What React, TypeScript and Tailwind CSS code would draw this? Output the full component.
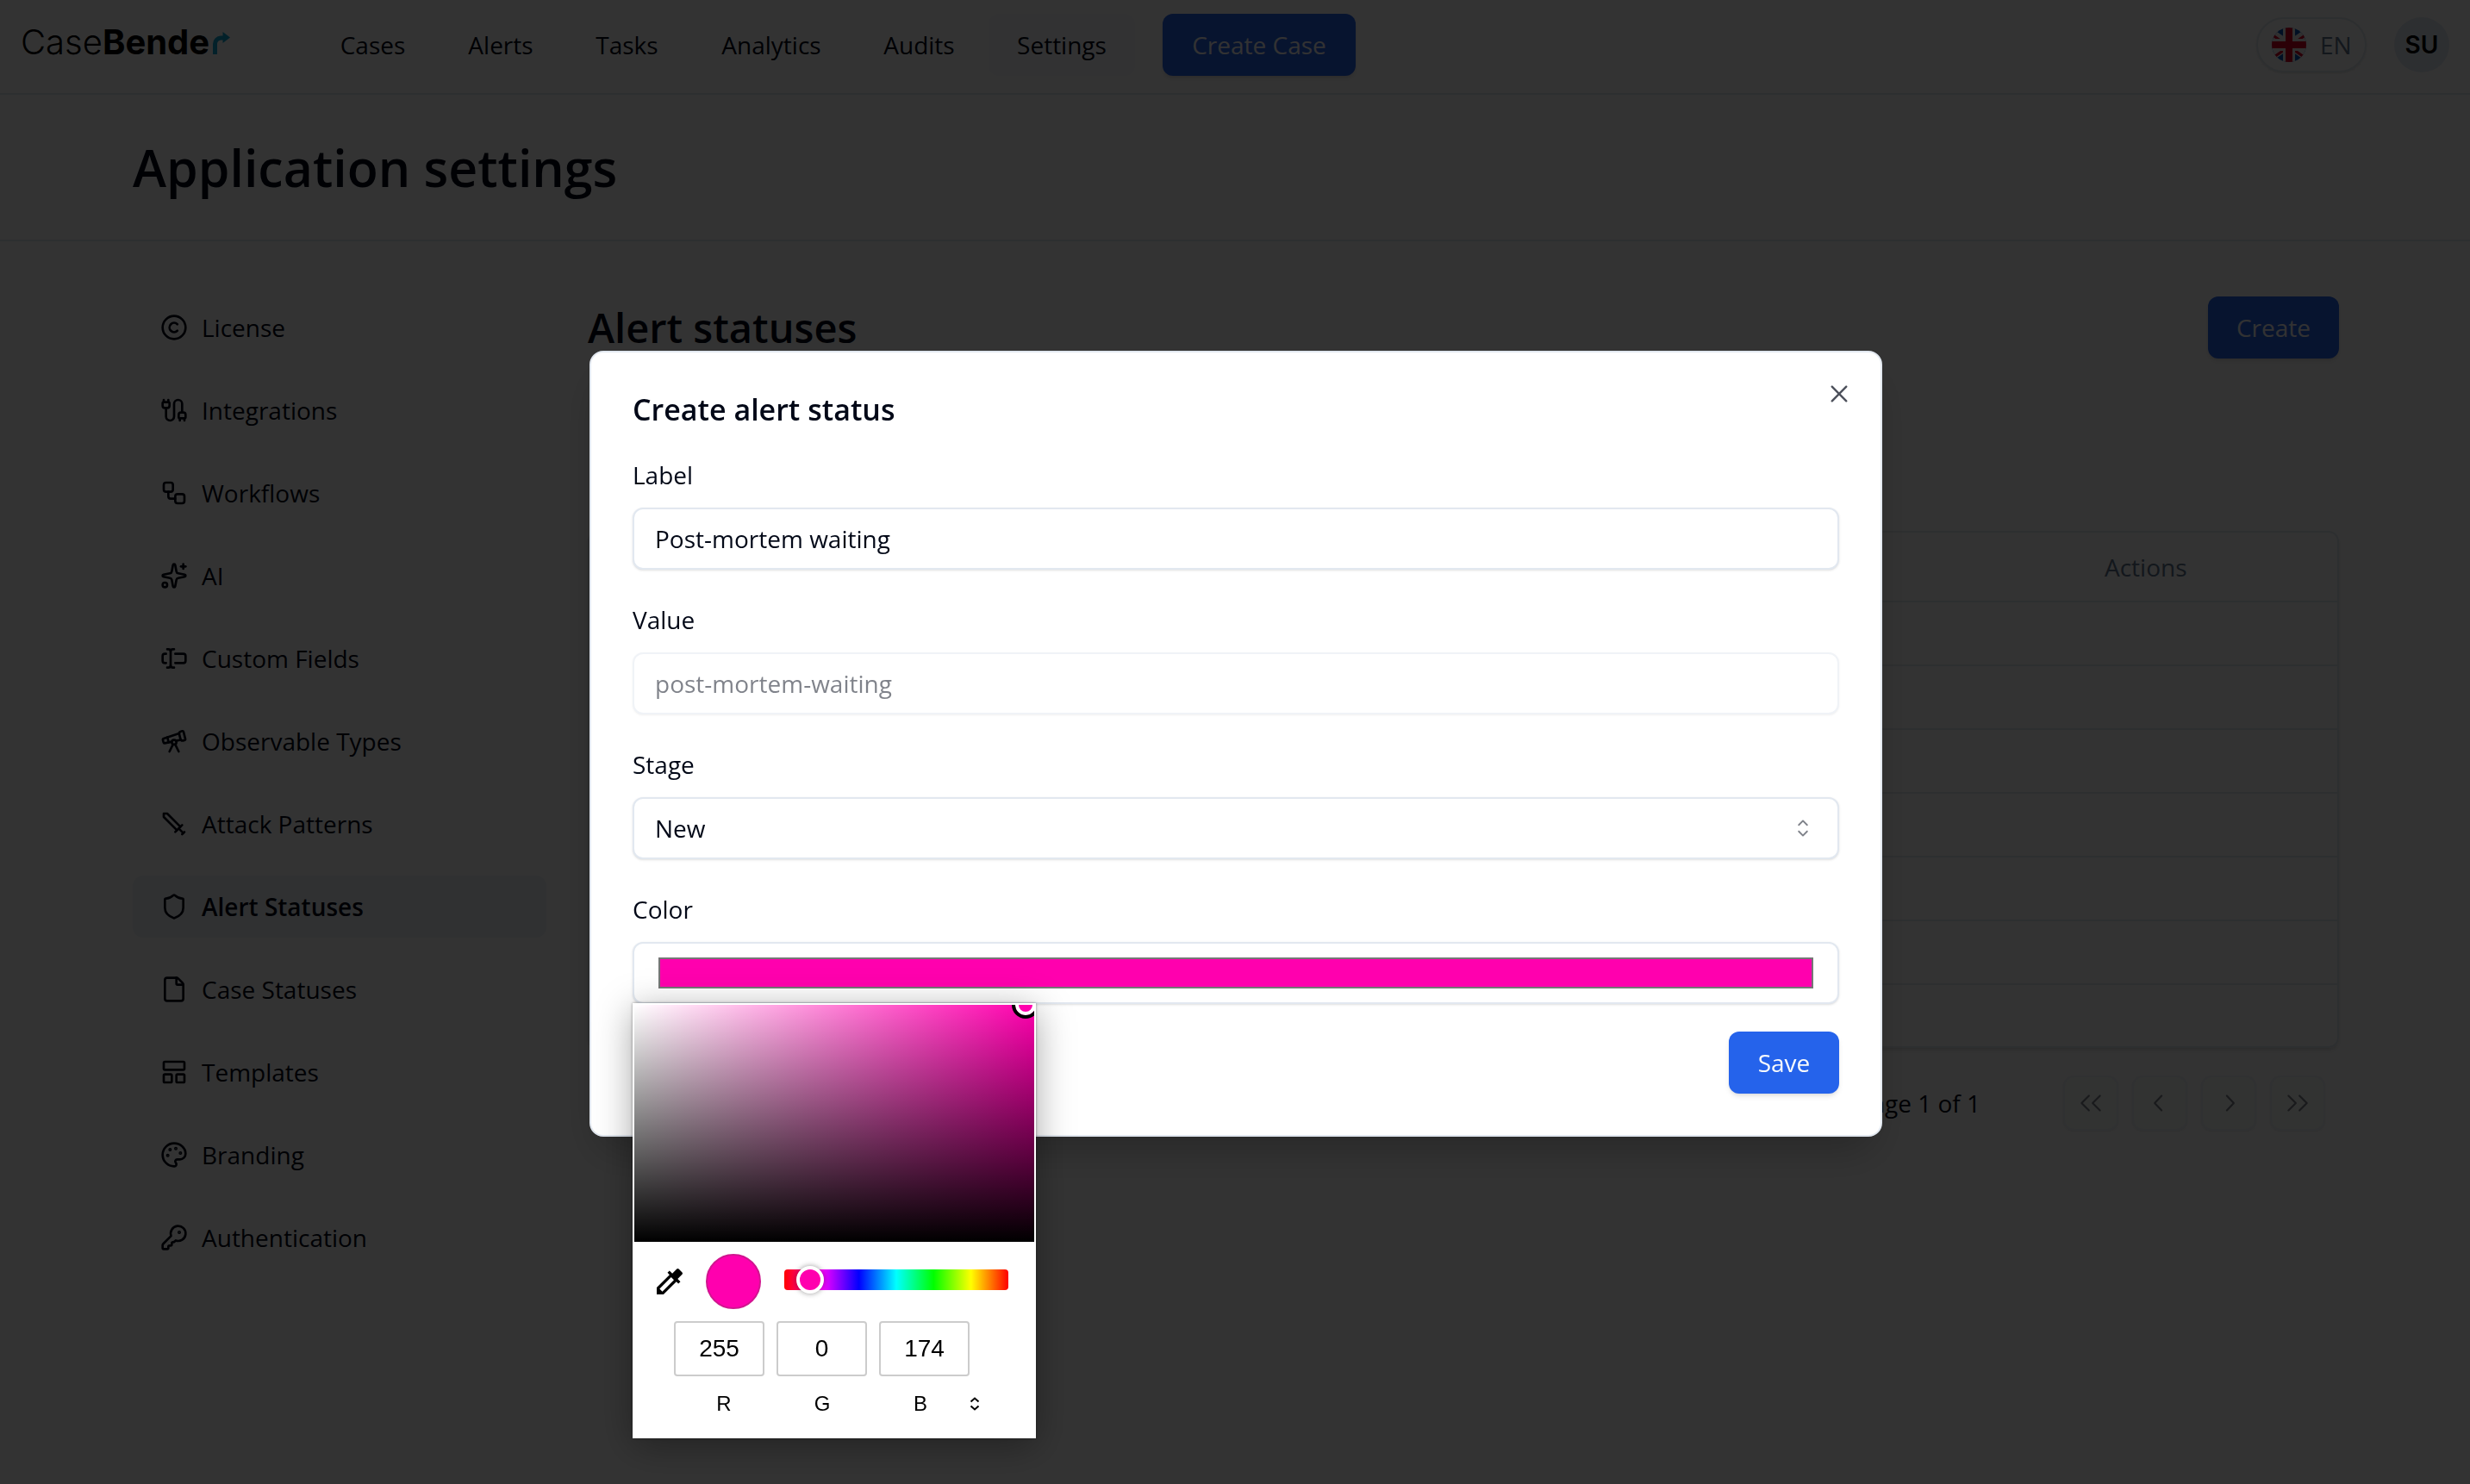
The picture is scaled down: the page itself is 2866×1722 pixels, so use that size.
import {
  Cable,
  Copyright,
  File,
  KeyRound,
  LayoutPanelTop,
  Palette,
  Shield,
  Sparkles,
  Sword,
  Telescope,
  TextCursorInput,
  Workflow,
} from "lucide-react";
import { MdColorize } from "react-icons/md";
import {
  RxCaretSort,
  RxChevronLeft,
  RxChevronRight,
  RxCross2,
  RxDoubleArrowLeft,
  RxDoubleArrowRight,
} from "react-icons/rx";

const navLinks = [
  { label: "Cases", width: "w-[141px]" },
  { label: "Alerts", width: "w-[140px]" },
  { label: "Tasks", width: "w-[137px]" },
  { label: "Analytics", width: "w-[182px]" },
  { label: "Audits", width: "w-[145px]" },
  { label: "Settings", width: "w-[170px]", active: true },
];

const menu = [
  { label: "License", icon: Copyright },
  { label: "Integrations", icon: Cable },
  { label: "Workflows", icon: Workflow },
  { label: "AI", icon: Sparkles },
  { label: "Custom Fields", icon: TextCursorInput },
  { label: "Observable Types", icon: Telescope },
  // blade points to the upper left
  { label: "Attack Patterns", icon: Sword, flip: true },
  { label: "Alert Statuses", icon: Shield, active: true },
  { label: "Case Statuses", icon: File },
  { label: "Templates", icon: LayoutPanelTop },
  { label: "Branding", icon: Palette },
  { label: "Authentication", icon: KeyRound },
];

const pagerButtons = [
  { label: "First page", icon: RxDoubleArrowLeft },
  { label: "Previous page", icon: RxChevronLeft },
  { label: "Next page", icon: RxChevronRight },
  { label: "Last page", icon: RxDoubleArrowRight },
];

const channels = [
  { name: "R", value: 255 },
  { name: "G", value: 0 },
  { name: "B", value: 174 },
];

function Logo() {
  return (
    <a href="#" className="flex w-[338px] shrink-0 items-baseline pb-1.5 font-['Inter',sans-serif] text-[40px] leading-[48px] text-black">
      <span className="font-light">Case</span>
      <span className="font-bold">Bende</span>
      <svg viewBox="0 0 20 26" className="ml-1 h-[26px] w-5" fill="none">
        <path d="M2.5 26V14a7 7 0 0 1 7-7H13" stroke="#12a5d0" strokeWidth="5" />
        <path d="M11.500 0 20 6.500 11.500 13z" fill="#12a5d0" />
      </svg>
    </a>
  );
}

function FlagUK() {
  return (
    <svg viewBox="0 0 40 40" className="h-10 w-10">
      <clipPath id="flag-round">
        <circle cx="20" cy="20" r="20" />
      </clipPath>
      <g clipPath="url(#flag-round)">
        <path fill="#0052b4" d="M0 0h40v40H0z" />
        <path d="M-6 2 46 38M46 2-6 38" stroke="#f0f0f0" strokeWidth="9" />
        <path d="M-6 4 46 40M46 4-6 40" stroke="#d80027" strokeWidth="3" />
        <path d="M20 0v40M0 20h40" stroke="#f0f0f0" strokeWidth="14" />
        <path d="M20 0v40M0 20h40" stroke="#d80027" strokeWidth="8" />
      </g>
    </svg>
  );
}

function Header() {
  return (
    <header className="flex h-[110px] items-start border-b-2 border-slate-200 px-6 pt-4">
      <div className="flex h-[72px] flex-1 items-center">
        <Logo />
        <nav className="flex items-center gap-2">
          {navLinks.map(({ label, width, active }) => (
            <a
              key={label}
              href="#"
              className={`${width} flex h-[72px] items-center justify-center rounded-xl font-medium ${active ? "bg-slate-50" : ""}`}
            >
              {label}
            </a>
          ))}
        </nav>
        <button className="ml-8 h-[72px] w-56 rounded-xl bg-[#2563eb] font-medium text-slate-50 shadow-md">
          Create Case
        </button>
      </div>
      <div className="flex h-[72px] items-center gap-8">
        <button className="flex h-16 w-32 items-center gap-4 rounded-full border-2 border-slate-200 pl-4 text-slate-500 shadow-sm">
          <FlagUK />
          EN
        </button>
        <button className="h-16 w-16 rounded-full bg-[#e2e8f4] font-['Inter',sans-serif] font-semibold text-black">
          SU
        </button>
      </div>
    </header>
  );
}

function Sidebar() {
  return (
    <nav className="flex w-[480px] shrink-0 flex-col gap-6">
      {menu.map(({ label, icon: Icon, active, flip }) => (
        <a
          key={label}
          href="#"
          className={`flex h-[72px] items-center gap-4 rounded-xl px-8 ${active ? "bg-slate-100 font-semibold" : "font-medium"}`}
        >
          <Icon className={`h-8 w-8 ${flip ? "-scale-x-100" : ""}`} />
          {label}
        </a>
      ))}
    </nav>
  );
}

function StatusTable() {
  return (
    <div className="mt-[200px] rounded-xl border-2 border-slate-200 shadow-md">
      <table className="w-full text-left">
        <thead>
          <tr className="h-20 border-b-2 border-slate-200 text-slate-500">
            <td />
            <th scope="col" className="w-[270px] font-medium">
              Actions
            </th>
          </tr>
        </thead>
        <tbody>
          {[1, 2, 3, 4, 5, 6, 7].map((row) => (
            <tr key={row} className="h-[74px] border-b-2 border-slate-200 last:h-[72px] last:border-0">
              <td />
              <td />
            </tr>
          ))}
        </tbody>
      </table>
    </div>
  );
}

function Pagination() {
  return (
    <div className="mt-8 flex items-center justify-end gap-24 pr-4">
      <span className="font-medium">Page 1 of 1</span>
      <div className="flex gap-4">
        {pagerButtons.map(({ label, icon: Icon }) => (
          <button
            key={label}
            disabled
            aria-label={label}
            className="flex h-16 w-16 items-center justify-center rounded-xl border-2 border-slate-200 bg-[#f0faf6] opacity-50 shadow-sm"
          >
            <Icon className="h-8 w-8" />
          </button>
        ))}
      </div>
    </div>
  );
}

function ColorPicker() {
  return (
    <div className="absolute top-[71px] left-0 w-[468px] border-2 border-white bg-white pb-[22px] font-['Liberation_Sans',Arial,sans-serif] text-black shadow-[0_8px_40px_rgba(0,0,0,0.35),0_0_3px_rgba(0,0,0,0.4)]">
      {/* saturation / brightness area */}
      <div className="relative h-[275px] overflow-hidden bg-[linear-gradient(to_top,#000,transparent),linear-gradient(to_right,#fff,transparent)] bg-[#ff00ae]">
        <div className="absolute -top-4 -right-1.5 h-8 w-8 rounded-full border-4 border-black bg-[#ff00ae] shadow-[inset_0_0_0_4px_#fff]" />
      </div>

      <div className="mt-3.5 flex h-16 items-center pl-[21px]">
        <button aria-label="Pick a color from the screen">
          <MdColorize className="h-10 w-10" />
        </button>
        <div className="ml-[22px] h-16 w-16 rounded-full border-2 border-[#d1158f] bg-[#ff00ae]" />
        <div className="mb-1 ml-[27px] flex h-6 w-[260px] items-center rounded-sm bg-[linear-gradient(to_right,#f00,#f0f,#00f,#0ff,#0f0,#ff0,#f00)]">
          <input
            type="range"
            aria-label="Hue"
            min={0}
            max={360}
            defaultValue={41}
            className="-mx-4 h-8 w-[292px] shrink-0 appearance-none bg-transparent [&::-webkit-slider-thumb]:h-8 [&::-webkit-slider-thumb]:w-8 [&::-webkit-slider-thumb]:appearance-none [&::-webkit-slider-thumb]:rounded-full [&::-webkit-slider-thumb]:border-4 [&::-webkit-slider-thumb]:border-white [&::-webkit-slider-thumb]:bg-[#ff00ae] [&::-webkit-slider-thumb]:shadow-[0_0_6px_rgba(0,0,0,0.4)]"
          />
        </div>
      </div>

      <div className="mt-3.5 flex gap-3.5 pl-[46px]">
        {channels.map(({ name, value }) => (
          <input
            key={name}
            id={`channel-${name}`}
            defaultValue={value}
            className="h-16 w-[105px] rounded-sm border-2 border-[#ccc] text-center text-[28px]"
          />
        ))}
      </div>
      <div className="mt-4 flex items-center pl-[47px] text-[24px] leading-8">
        {channels.map(({ name }) => (
          <label key={name} htmlFor={`channel-${name}`} className="w-[114px] text-center">
            {name}
          </label>
        ))}
        <button aria-label="Change color format">
          <svg viewBox="0 0 12 16" className="h-4 w-3" fill="none" stroke="currentColor" strokeWidth="2">
            <path d="M1.500 5.500 6 1.500l4.500 4M1.500 10.500l4.500 4 4.500-4" />
          </svg>
        </button>
      </div>
    </div>
  );
}

const inputClass =
  "block h-[72px] w-full rounded-xl border-2 border-slate-200 bg-white px-6 shadow-sm disabled:opacity-50";
const labelClass = "mb-6 block leading-7 font-medium";

function CreateStatusDialog() {
  return (
    <div className="fixed inset-0 flex items-center justify-center bg-black/80 pt-1 pl-0.5">
      <div
        role="dialog"
        aria-labelledby="dialog-title"
        className="relative w-full max-w-[1500px] rounded-2xl border-2 border-slate-200 bg-white p-12 shadow-2xl"
      >
        <button aria-label="Close" className="absolute top-8 right-8 opacity-70">
          <RxCross2 className="h-8 w-8" />
        </button>
        <h3 id="dialog-title" className="text-[34px] leading-9 font-semibold">
          Create alert status
        </h3>

        <form className="mt-11" onSubmit={(e) => e.preventDefault()}>
          <div className="flex flex-col gap-11">
            <div>
              <label htmlFor="status-label" className={labelClass}>Label</label>
              <input id="status-label" className={inputClass} defaultValue="Post-mortem waiting" />
            </div>
            <div>
              <label htmlFor="status-value" className={labelClass}>Value</label>
              <input id="status-value" className={inputClass} defaultValue="post-mortem-waiting" disabled />
            </div>
            <div>
              <label htmlFor="status-stage" className={labelClass}>Stage</label>
              <div className="relative">
                <select id="status-stage" className={`${inputClass} appearance-none`}>
                  <option>New</option>
                </select>
                <RxCaretSort className="pointer-events-none absolute top-5 right-[26px] h-8 w-8 opacity-50" />
              </div>
            </div>
            <div>
              <label htmlFor="status-color" className={labelClass}>Color</label>
              <div className="relative">
                <input
                  id="status-color"
                  type="color"
                  defaultValue="#ff00ae"
                  className="block h-[72px] w-full rounded-xl border-2 border-slate-200 bg-white px-7 py-4 shadow-sm [&::-webkit-color-swatch]:rounded-none [&::-webkit-color-swatch]:border-2 [&::-webkit-color-swatch]:border-[#767676] [&::-webkit-color-swatch-wrapper]:p-0"
                />
                <ColorPicker />
              </div>
            </div>
          </div>
          <div className="mt-8 flex justify-end">
            <button className="h-[72px] w-32 rounded-xl bg-[#2563eb] font-medium text-slate-50 shadow-md">
              Save
            </button>
          </div>
        </form>
      </div>
    </div>
  );
}

export default function App() {
  return (
    <div className="min-h-screen bg-white font-['Open_Sans',sans-serif] text-[28px] leading-10 text-[#020817]">
      <Header />
      <section className="border-b-2 border-slate-200 py-12 pl-0.5">
        <h1 className="mx-auto max-w-[2560px] text-[59px] leading-[72px] font-semibold">Application settings</h1>
      </section>
      <div className="pt-16 pl-0.5">
        <div className="mx-auto flex max-w-[2560px] gap-12">
          <Sidebar />
          <main className="min-w-0 flex-1">
            <div className="flex items-center justify-between">
              <h2 className="text-[47px] leading-[72px] font-semibold">Alert statuses</h2>
              <button className="h-[72px] w-[152px] rounded-xl bg-[#2563eb] font-medium text-slate-50 shadow-md">
                Create
              </button>
            </div>
            <StatusTable />
            <Pagination />
          </main>
        </div>
      </div>
      <CreateStatusDialog />
    </div>
  );
}
